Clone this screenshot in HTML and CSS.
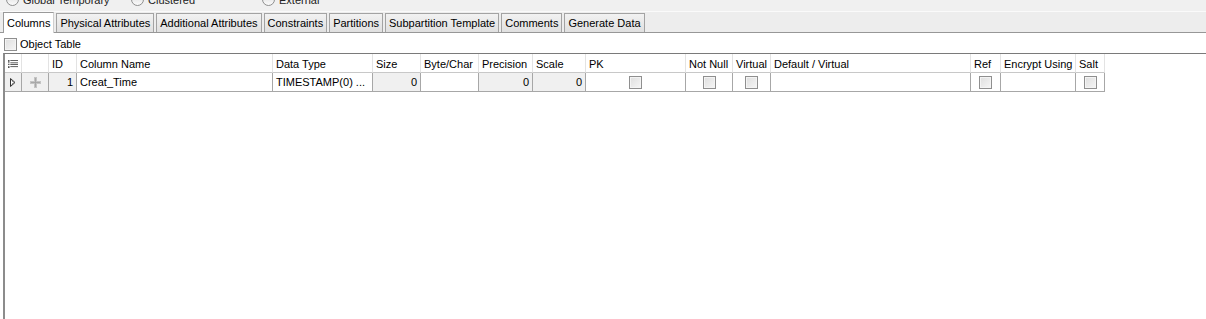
FILE: index.html
```html
<!DOCTYPE html>
<html lang="en">
<head>
  <meta charset="UTF-8" />
  <title>Table Properties - Columns</title>
  <link rel="stylesheet" href="styles.css">
</head>
<body>
  <div class="radio-row">
    <div class="radio-row-inner">
      <label class="radio r1"><span class="dot"></span>Global Temporary</label>
      <label class="radio r2"><span class="dot"></span>Clustered</label>
      <label class="radio r3"><span class="dot"></span>External</label>
    </div>
  </div>

  <div class="tab-strip">
    <div class="tab active">Columns</div>
    <div class="tab">Physical Attributes</div>
    <div class="tab">Additional Attributes</div>
    <div class="tab">Constraints</div>
    <div class="tab">Partitions</div>
    <div class="tab">Subpartition Template</div>
    <div class="tab">Comments</div>
    <div class="tab">Generate Data</div>
  </div>

  <div class="object-table">
    <span class="check"></span>Object Table
  </div>

  <div class="grid-panel">
    <div class="grid-row head">
      <div class="cell">
        <svg width="13" height="10" viewBox="0 0 13 10">
          <rect x="0" y="0" width="2" height="2" fill="#333"/>
          <rect x="3" y="0" width="10" height="1" fill="#333"/>
          <rect x="0" y="3" width="2" height="1" fill="#333"/>
          <rect x="3" y="3" width="10" height="1" fill="#333"/>
          <rect x="0" y="5" width="2" height="1" fill="#333"/>
          <rect x="3" y="5" width="10" height="1" fill="#333"/>
          <rect x="0" y="8" width="2" height="2" fill="#333"/>
          <rect x="3" y="8" width="10" height="1" fill="#333"/>
        </svg>
      </div>
      <div class="cell"></div>
      <div class="cell">ID</div>
      <div class="cell">Column Name</div>
      <div class="cell">Data Type</div>
      <div class="cell">Size</div>
      <div class="cell">Byte/Char</div>
      <div class="cell">Precision</div>
      <div class="cell">Scale</div>
      <div class="cell">PK</div>
      <div class="cell">Not Null</div>
      <div class="cell">Virtual</div>
      <div class="cell">Default / Virtual</div>
      <div class="cell">Ref</div>
      <div class="cell">Encrypt Using</div>
      <div class="cell">Salt</div>
    </div>

    <div class="grid-row data">
      <div class="cell grey center">
        <svg width="6" height="9" viewBox="0 0 6 9">
          <path d="M0.5 0.5 L5 4.5 L0.5 8.5 Z" fill="#fff" stroke="#333" stroke-width="1"/>
          <path d="M1.5 2.5 L3.5 4.5 L1.5 6.5" fill="none" stroke="#999" stroke-width="1"/>
        </svg>
      </div>
      <div class="cell grey center">
        <svg width="11" height="11" viewBox="0 0 11 11">
          <rect x="4" y="0" width="3" height="11" fill="#c4c4c4"/>
          <rect x="0" y="4" width="11" height="3" fill="#c4c4c4"/>
          <rect x="5" y="1" width="1" height="9" fill="#a8a8a8"/>
          <rect x="1" y="5" width="9" height="1" fill="#a8a8a8"/>
        </svg>
      </div>
      <div class="cell grey num">1</div>
      <div class="cell">Creat_Time</div>
      <div class="cell">TIMESTAMP(0) ...</div>
      <div class="cell grey num">0</div>
      <div class="cell"></div>
      <div class="cell grey num">0</div>
      <div class="cell grey num">0</div>
      <div class="cell center"><span class="check"></span></div>
      <div class="cell center"><span class="check"></span></div>
      <div class="cell center"><span class="check"></span></div>
      <div class="cell"></div>
      <div class="cell center"><span class="check"></span></div>
      <div class="cell"></div>
      <div class="cell center"><span class="check"></span></div>
    </div>
  </div>
</body>
</html>
```

FILE: styles.css
```css
body {
  margin: 0;
  padding: 0;
  font-family: 'Liberation Sans', Arial, sans-serif;
  font-size: 11px;
  color: #000;
  background: #fff;
  height: 319px;
  overflow: hidden;
  display: flex;
  flex-direction: column;
}

/* radio buttons, mostly scrolled out of view */
.radio-row {
  height: 11px;
  overflow: hidden;
  background: #f0f0f0;
  border-bottom: 1px solid #fafafa;
}

.radio-row-inner {
  display: flex;
  margin-top: -7px;
  padding-left: 6px;
}

.radio {
  display: flex;
  align-items: center;
  gap: 4px;
  color: #222;
}

.r1 { width: 125px; }
.r2 { width: 131px; }

.dot {
  width: 11px;
  height: 11px;
  border: 1px solid #8e8f8f;
  border-radius: 50%;
  background: linear-gradient(#dcdcdc, #fafafa);
}

/* tabs */
.tab-strip {
  display: flex;
  align-items: flex-end;
  gap: 2px;
  height: 20px;
  padding-left: 3px;
  background: #ededed;
  border-bottom: 1px solid #979797;
}

.tab {
  box-sizing: border-box;
  height: 19px;
  padding: 3px 3px 0;
  border: 1px solid #a3a3a3;
  border-bottom: none;
  background: linear-gradient(#f2f2f2, #e0e0e0);
  color: #000;
  white-space: nowrap;
}

.tab.active {
  height: 21px;
  padding-top: 4px;
  background: #fff;
  margin-bottom: -1px;
  border-color: #9a9a9a;
  border-right-color: #cfcfcf;
}

/* object table option */
.object-table {
  box-sizing: border-box;
  display: flex;
  align-items: center;
  gap: 3px;
  height: 20px;
  padding: 2px 0 0 4px;
}

.check {
  display: inline-block;
  box-sizing: border-box;
  width: 13px;
  height: 13px;
  border: 1px solid #8f8f8f;
  background: linear-gradient(135deg, #dedede, #f6f6f6);
  box-shadow: inset 0 0 0 1px #f4f4f4;
}

/* column grid */
.grid-panel {
  flex: 1;
  margin-left: 3px;
  border-left: 2px solid #8c8c8c;
  border-top: 1px solid #7a7a7a;
  background: #fff;
}

.grid-row {
  display: grid;
  grid-template-columns: 17px 27px 28px 196px 100px 48px 58px 54px 53px 100px 47px 38px 200px 30px 75px 29px;
  width: 1100px;
  height: 19px;
}

.cell {
  display: flex;
  align-items: center;
  padding: 0 3px;
  white-space: nowrap;
  overflow: hidden;
}

.head .cell {
  padding-top: 1px;
  border-right: 1px solid #e3e3e3;
  border-bottom: 1px solid #c8c8c8;
}

.data .cell {
  border-right: 1px solid #a7a7a7;
  border-bottom: 1px solid #a7a7a7;
}

.cell.grey {
  background: #f0f0f0;
}

.cell.num {
  justify-content: flex-end;
}

.cell.center {
  justify-content: center;
}
```
